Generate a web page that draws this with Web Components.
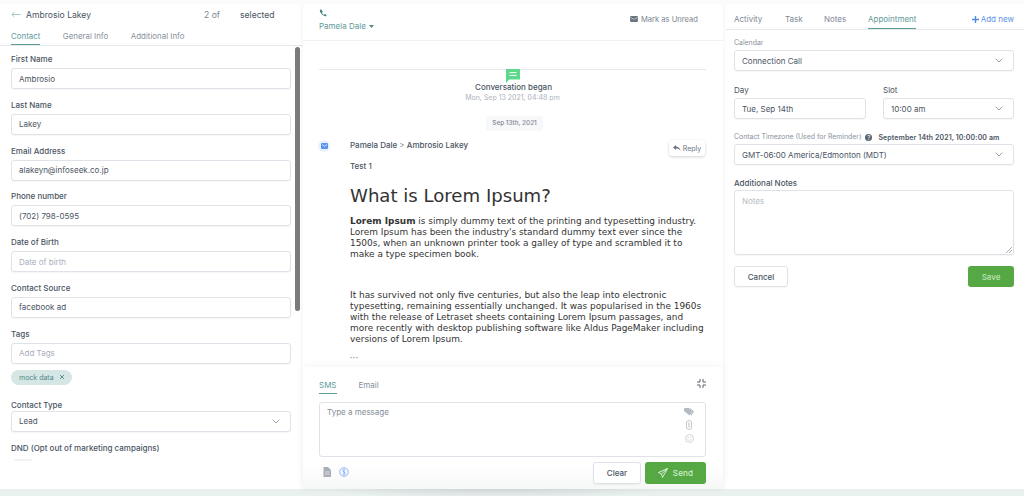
<!DOCTYPE html>
<html><head><meta charset="utf-8"><style>
html,body{margin:0;height:496px;overflow:hidden;background:#fff;font-family:Inter,"Liberation Sans",sans-serif}
</style></head><body>
<app-shell>
  <contact-panel></contact-panel>
  <conversation-panel></conversation-panel>
  <appointment-panel></appointment-panel>
</app-shell>
<script>
const caret='<svg style="margin-right:3px" width="8" height="5" viewBox="0 0 8 5" fill="none" stroke="#8a93a0" stroke-width=".9"><path d="M.7.7 4 4l3.300-3.300"/></svg>';
function define(name,css,html){customElements.define(name,class extends HTMLElement{constructor(){super();this.attachShadow({mode:'open'}).innerHTML='<style>'+css+'</style>'+(typeof html==='function'?html(this):html)}})}

define('app-shell',`:host{display:grid;grid-template-columns:303px 420px 301px;height:496px;background:#fff;position:relative;overflow:hidden}
.foot{position:absolute;left:0;right:0;bottom:0;height:7px;background:radial-gradient(ellipse 170px 9px at 495px 0,#d6dcdb 0,#dfe6e5 60%,#e9f1ef 100%)}
.top{position:absolute;left:0;right:0;top:0;height:4px;background:#fafbfb;z-index:3}`,'<slot></slot><div class="foot"></div><div class="top"></div>');

define('form-field',`:host{display:block;margin-bottom:var(--mb,10.800px)}
label{display:block;font-size:8px;font-weight:500;color:#4b5563;line-height:11px;margin-bottom:var(--lm,3px)}
.box{height:21px;box-sizing:border-box;border:1px solid #dfe3e9;border-radius:3px;background:#fff;padding:0 7px;display:flex;align-items:center;justify-content:space-between;font-size:8px;color:#4b5563;box-shadow:0 1px 1px rgba(0,0,0,.04)}
.ph{color:#a9b0ba}`,
el=>`<label>${el.getAttribute('label')}</label><div class="box"><span class="${el.hasAttribute('ph')?'ph':''}">${el.getAttribute('value')}</span>${el.hasAttribute('select')?caret:''}</div><slot></slot>`);

define('contact-panel',`:host{display:block;position:relative;height:489px;overflow:hidden;background:#fff;z-index:1}
.head{display:flex;align-items:center;height:29px;padding:0 0 0 11px;font-size:8.600px;color:#4b5563}
.back{margin-right:5px;display:block}.name{width:178px}
.of{color:#7e8793;width:36px}
.tabs{display:flex;gap:22.500px;padding-left:11px;height:16px;border-bottom:1px solid #e5e8ec;font-size:7.900px;color:#87909b;line-height:15px}
.tabs span{height:16px;box-sizing:border-box}.on{color:#5e9a98;border-bottom:1px solid #5e9a98}
.form{padding:8px 12px 0 11px;width:280px}
.bar{position:absolute;left:295px;top:47px;width:5px;height:264px;background:#7b7b7b;border-radius:3px}
.chip{display:inline-flex;align-items:center;gap:5px;background:#d6e6e5;color:#4f8a88;font-size:7px;height:15px;padding:0 7px 0 8px;border-radius:8px;margin-top:2px}
.dnd{font-size:8px;font-weight:500;color:#4b5563;line-height:11px;margin-top:11.500px}
.stub{width:18px;height:2px;background:#f0f2f4;margin:5px 0 0 3px;border-radius:2px 2px 0 0}`,
`<div class="head"><svg class="back" width="10" height="7" viewBox="0 0 11 7" fill="none" stroke="#9cc2c0" stroke-width="1"><path d="M10.500 3.500H1M3.800.7 1 3.500l2.800 2.800"/></svg><span class="name">Ambrosio Lakey</span><span class="of">2 of</span><span>selected</span></div>
<div class="tabs"><span class="on">Contact</span><span>General Info</span><span>Additional Info</span></div>
<div class="form">
<form-field label="First Name" value="Ambrosio"></form-field>
<form-field label="Last Name" value="Lakey"></form-field>
<form-field label="Email Address" value="alakeyn@infoseek.co.jp"></form-field>
<form-field label="Phone number" value="(702) 798-0595"></form-field>
<form-field label="Date of Birth" value="Date of birth" ph></form-field>
<form-field label="Contact Source" value="facebook ad"></form-field>
<form-field label="Tags" value="Add Tags" ph style="--mb:15px"><span class="chip">mock data <svg width="6" height="6" viewBox="0 0 6 6" stroke="#4f8a88" stroke-width=".9"><path d="M1 1l4 4M5 1 1 5"/></svg></span></form-field>
<form-field label="Contact Type" value="Lead" select style="--mb:0;--lm:0px"></form-field>
<div class="dnd">DND (Opt out of marketing campaigns)</div><div class="stub"></div>
</div><div class="bar"></div>`);

define('conversation-panel',`:host{display:flex;flex-direction:column;height:489px;background:#fff;position:relative;box-shadow:0 0 6px rgba(0,0,0,.06);z-index:2;width:420px}
.head{height:41px;border-bottom:1px solid #eef0f2;padding:9px 16px 0;box-sizing:border-box;display:flex;justify-content:space-between;flex:none}
.who{font-size:8px;color:#5e9a98;display:flex;flex-direction:column;gap:4px;line-height:11px}
.who span{display:flex;align-items:center;gap:3px}
.mark{font-size:7.600px;color:#7e8793;display:flex;align-items:center;gap:3px;height:20px;margin-right:9px}
.scroll{flex:1;padding:28px 17px 0 16px;min-height:0;overflow:hidden}
.rule{height:1px;background:#e6e9ec;position:relative}
.rule svg{position:absolute;left:187px;top:0}
.began{text-align:center;margin-top:12px;font-size:8px;font-weight:500;color:#4b5563;line-height:11px;padding-left:2px}
.ts{text-align:center;font-size:7px;color:#adb3bc;line-height:10px}
.day{width:57px;height:15px;line-height:15px;background:#f7f8fa;border-radius:3px;margin:13px auto 0;font-size:6.400px;font-weight:500;color:#7e8793;text-align:center;position:relative;left:2px}
.msg{display:grid;grid-template-columns:31px 1fr;margin-top:9px;position:relative}
.ic{width:10px;height:10px;margin-top:1px;background:#e8f0fd;border-radius:50%;display:flex;align-items:center;justify-content:center;box-shadow:0 0 0 1px #eef3fd}
.from{font-size:8px;font-weight:500;color:#4b5563;line-height:11px}.from b{font-weight:400;color:#7e8793}
.sub{font-size:8px;font-weight:500;color:#4b5563;line-height:11px;margin-top:10px}
.reply{position:absolute;right:1px;top:0;width:36px;height:16px;background:#fff;box-shadow:0 1px 3px rgba(0,0,0,.18);border-radius:3px;font-size:7px;color:#6b7480;display:flex;align-items:center;justify-content:center;gap:2px}
h1{font:400 18.100px/24px "DejaVu Sans",sans-serif;color:#333;margin:12px 0 8px}
p{font:8.950px/11px "DejaVu Sans",sans-serif;color:#333;margin:0 0 29.500px;white-space:nowrap}
.dots{font-size:4px;color:#8a8f98;line-height:4px;letter-spacing:.6px;margin-top:-18px}
.comp{flex:none;height:122px;box-shadow:0 -3px 8px rgba(0,0,0,.03);background:linear-gradient(#fff 82%,#f6f7f7);padding:12px 17px 0 16px;box-sizing:border-box;position:relative;z-index:2}
.ct{display:flex;gap:22px;font-size:8px;color:#87909b;height:22px;align-items:flex-start;position:relative;line-height:12px}
.ct .on{color:#5e9a98;border-bottom:1px solid #5e9a98;height:14px}
.ct svg{position:absolute;right:0;top:0}
.ta{height:55px;background:#fff;border:1px solid #dfe3e9;border-radius:3px;position:relative;box-sizing:border-box;padding:4px 7px;font-size:8px;color:#858d98;margin-top:1px}
.side{position:absolute;right:11px;top:5px;display:flex;flex-direction:column;align-items:center;gap:4px}
.row{display:flex;justify-content:space-between;align-items:flex-start;margin-top:5px}
.l{display:flex;gap:8px;padding:5px 0 0 4px}
.btns{display:flex;gap:4px}
.clear,.send{height:22px;border-radius:3px;font-size:8px;display:flex;align-items:center;justify-content:center;font-weight:500;box-sizing:border-box}
.clear{width:48px;background:#fff;border:1px solid #dfe3e9;color:#4b5563;box-shadow:0 1px 2px rgba(0,0,0,.06)}
.send{width:61px;background:#55a843;color:#d6efd0;gap:5px;letter-spacing:.2px}`,
`<div class="head"><div class="who"><svg width="8" height="8" viewBox="0 0 24 24" fill="#3f7f80"><path d="M6.600 1.500 2.500 2.500C1.800 12 12 22.200 21.500 21.500l1-4.100-5-2.200-2.400 2.900c-3.300-1.600-5-3.300-6.600-6.600l2.900-2.400z"/></svg><span>Pamela Dale <svg width="5" height="3" viewBox="0 0 5 3" fill="#4f8a88"><path d="M0 0h5L2.500 3z"/></svg></span></div>
<div class="mark"><svg width="8" height="6" viewBox="0 0 18 14"><rect width="18" height="14" rx="1.500" fill="#6b7480"/><path d="M1 3l8 5 8-5" fill="none" stroke="#fff" stroke-width="1.200"/></svg>Mark as Unread</div></div>
<div class="scroll">
<div class="rule"><svg width="14" height="14" viewBox="0 0 14 14"><path d="M0 0h14v10.500H3.200L0 14z" fill="#5cd98a"/><path d="M3.500 3.600h7M3.500 6.400h7" stroke="#fff" stroke-width="1"/></svg></div>
<div class="began">Conversation began</div><div class="ts">Mon, Sep 13 2021, 04:48 pm</div>
<div class="day">Sep 13th, 2021</div>
<div class="msg"><div class="ic"><svg width="7" height="6" viewBox="0 0 14 12"><rect width="14" height="12" rx="2" fill="#5a93f0"/><path d="M2 3l5 3.500L12 3" fill="none" stroke="#fff" stroke-width="1.400"/></svg></div>
<div><div class="from">Pamela Dale <b>&gt;</b> Ambrosio Lakey</div><div class="sub">Test 1</div>
<h1>What is Lorem Ipsum?</h1>
<p><b>Lorem Ipsum</b> is simply dummy text of the printing and typesetting industry.<br>Lorem Ipsum has been the industry's standard dummy text ever since the<br>1500s, when an unknown printer took a galley of type and scrambled it to<br>make a type specimen book.</p>
<p>It has survived not only five centuries, but also the leap into electronic<br>typesetting, remaining essentially unchanged. It was popularised in the 1960s<br>with the release of Letraset sheets containing Lorem Ipsum passages, and<br>more recently with desktop publishing software like Aldus PageMaker including<br>versions of Lorem Ipsum.</p>
<div class="dots">•••</div></div>
<div class="reply"><svg width="8" height="6" viewBox="0 0 16 12" fill="#6b7480"><path d="M6 0 0 5l6 5V7c4 0 7 1 9 5-.500-5-3.500-9-9-9.200z"/></svg>Reply</div></div>
</div>
<div class="comp"><div class="ct"><span class="on">SMS</span><span>Email</span><svg width="9" height="9" viewBox="0 0 9 9" fill="none" stroke="#5f6773" stroke-width="1"><path d="M3 0v3H0M6 0v3h3M0 6h3v3M9 6H6v3"/></svg></div>
<div class="ta">Type a message<div class="side"><svg width="10" height="8" viewBox="0 0 20 16" fill="#b4bac2"><path d="M0 1.500 1.500 0H9l8 7-6 8-11-9z"/><path d="M12 0l8 7-5 8-2-.500 4-7.500-7-7z"/></svg><svg width="6" height="10" viewBox="0 0 12 20" fill="none" stroke="#b4bac2" stroke-width="1.600"><rect x="1" y="1" width="10" height="18" rx="5"/><path d="M6 5v10" stroke-width="2"/></svg><svg width="9" height="9" viewBox="0 0 18 18" fill="none" stroke="#b4bac2" stroke-width="1.200"><circle cx="9" cy="9" r="8"/><path d="M5 10.500c1.500 3 6.500 3 8 0"/><circle cx="6" cy="6.500" r=".6"/><circle cx="12" cy="6.500" r=".6"/></svg></div></div>
<div class="row"><div class="l"><svg width="8" height="10" viewBox="0 0 16 20"><path d="M1 0h9l6 6v14H1z" fill="#a9afb8"/><path d="M4 10h9M4 14h9" stroke="#eee" stroke-width="1.500"/></svg><svg width="10" height="10" viewBox="0 0 20 20" fill="none" stroke="#6a9bf0" stroke-width="1.500"><circle cx="10" cy="10" r="8.500"/><path d="M13 7c-1-2-6-2-6 .5s6 2.500 6 5-5 2.500-6 .5M10 3.500v13" stroke-width="1.300"/></svg></div>
<div class="btns"><div class="clear">Clear</div><div class="send"><svg width="10" height="10" viewBox="0 0 20 20" fill="none" stroke="#e8f5e4" stroke-width="1.800"><path d="M19 1 1 9l6 3 2 7z"/><path d="M19 1 7 12"/></svg>Send</div></div></div>
</div>`);

define('appointment-panel',`:host{display:block;height:489px;background:#fff;padding:0 10px 0 11px;box-sizing:border-box;font-size:8px;color:#4b5563;position:relative;z-index:1}
.tabs{display:flex;height:29px;border-bottom:1px solid #e5e8ec;font-size:8px;color:#7e8793;margin:0 -10px 0 -8px;padding:0 10px 0 8px}
.tabs span{height:29px;box-sizing:border-box;line-height:38px}
.tabs .a{width:51px}.tabs .b{width:39px}.tabs .c{width:44px}
.tabs .on{color:#5e9a98;border-bottom:1px solid #5e9a98;width:48px}
.tabs .add{margin-left:auto;color:#5c93e6;display:flex;gap:2px;align-items:flex-start}
.tabs .add svg{margin-top:15.500px}
.cap{font-size:6.900px;color:#8a929d;line-height:10px}
.box{height:21px;box-sizing:border-box;border:1px solid #dfe3e9;border-radius:3px;padding:0 7px;display:flex;align-items:center;justify-content:space-between;box-shadow:0 1px 1px rgba(0,0,0,.04);background:#fff}
.two{display:grid;grid-template-columns:132px 131px;gap:17px;margin-top:14px}
.lab{line-height:11px;margin-bottom:2px}
.tz{display:flex;align-items:center;gap:4px;margin-top:13px;margin-bottom:2px}
.tz b{font-size:7px;font-weight:600;color:#4b5563;letter-spacing:.1px;margin-left:2px}
.q{width:7px;height:7px;border-radius:50%;background:#5a6370;color:#fff;font-size:6px;line-height:7px;text-align:center}
.an{font-weight:500;line-height:11px;margin-top:13px;margin-bottom:1px}
.notes{height:65px;border:1px solid #dfe3e9;border-radius:3px;padding:5px 7px;color:#b5bbc3;box-sizing:border-box;position:relative;box-shadow:0 1px 1px rgba(0,0,0,.04)}
.notes svg{position:absolute;right:1px;bottom:1px}
.acts{display:flex;justify-content:space-between;margin-top:11px}
.cancel{width:54px;height:21px;border:1px solid #dfe3e9;border-radius:3px;display:flex;align-items:center;justify-content:center;box-sizing:border-box;box-shadow:0 1px 2px rgba(0,0,0,.05);font-weight:500}
.s{width:46px;height:21px;border-radius:3px;display:flex;align-items:center;justify-content:center;background:#55a843;color:#bfe3b6;font-weight:500}`,
`<div class="tabs"><span class="a">Activity</span><span class="b">Task</span><span class="c">Notes</span><span class="on">Appointment</span><span class="add"><svg width="7" height="7" viewBox="0 0 7 7" stroke="#4f8be0" stroke-width="1.400"><path d="M3.500 0v7M0 3.500h7"/></svg>Add new</span></div>
<div class="cap" style="margin-top:8px;margin-bottom:2px">Calendar</div>
<div class="box">Connection Call${caret}</div>
<div class="two"><div><div class="lab">Day</div><div class="box">Tue, Sep 14th</div></div><div><div class="lab">Slot</div><div class="box">10:00 am${caret}</div></div></div>
<div class="tz"><span class="cap">Contact Timezone (Used for Reminder)</span><span class="q">?</span><b>September 14th 2021, 10:00:00 am</b></div>
<div class="box">GMT-06:00 America/Edmonton (MDT)${caret}</div>
<div class="an">Additional Notes</div>
<div class="notes">Notes<svg width="6" height="6" viewBox="0 0 6 6" stroke="#8a8f98" stroke-width=".7"><path d="M0 6l6-6M3 6l3-3"/></svg></div>
<div class="acts"><div class="cancel">Cancel</div><div class="s">Save</div></div>`);
</script></body></html>
